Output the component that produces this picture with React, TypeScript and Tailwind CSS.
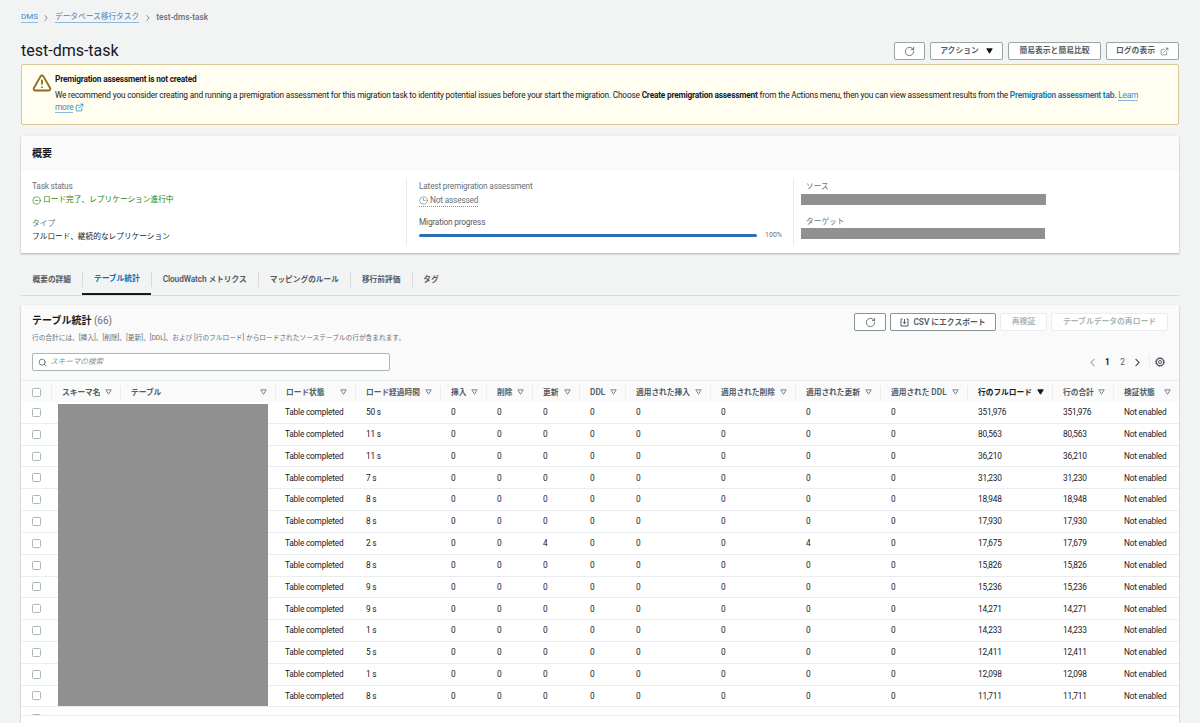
import { ChevronLeft, ChevronRight, CircleMinus, Clock3, ExternalLink, RotateCw, Search, TriangleAlert } from "lucide-react";
import type { ReactNode } from "react";

const GRID = "grid grid-cols-[30px_69px_155px_80px_85px_46px_46px_47px_46px_85px_85px_85px_87px_85px_61px_66px]";

const columns = ["スキーマ名", "テーブル", "ロード状態", "ロード経過時間", "挿入", "削除", "更新", "DDL", "適用された挿入", "適用された削除", "適用された更新", "適用された DDL", "行のフルロード", "行の合計", "検証状態"];

const rows: [string, string, string, string, string][] = [
  ["50 s", "0", "0", "351,976", "351,976"],
  ["11 s", "0", "0", "80,563", "80,563"],
  ["11 s", "0", "0", "36,210", "36,210"],
  ["7 s", "0", "0", "31,230", "31,230"],
  ["8 s", "0", "0", "18,948", "18,948"],
  ["8 s", "0", "0", "17,930", "17,930"],
  ["2 s", "4", "4", "17,675", "17,679"],
  ["8 s", "0", "0", "15,826", "15,826"],
  ["9 s", "0", "0", "15,236", "15,236"],
  ["9 s", "0", "0", "14,271", "14,271"],
  ["1 s", "0", "0", "14,233", "14,233"],
  ["5 s", "0", "0", "12,411", "12,411"],
  ["1 s", "0", "0", "12,098", "12,098"],
  ["8 s", "0", "0", "11,711", "11,711"],
];

function Caret({ filled = false }: { filled?: boolean }) {
  return (
    <svg width="7" height="6" viewBox="0 0 7 6" className="shrink-0">
      <path d="M0.8 0.8 H6.2 L3.5 5.2 Z" fill={filled ? "#16191f" : "none"} stroke={filled ? "#16191f" : "#7d868c"} strokeWidth="1" strokeLinejoin="round" />
    </svg>
  );
}

function Checkbox() {
  return <span className="block h-[9px] w-[9px] rounded-[1.5px] border border-[#aab7b8] bg-white" />;
}

function Button({ children, disabled = false, className = "" }: { children: ReactNode; disabled?: boolean; className?: string }) {
  return (
    <div className={`flex h-[18px] items-center justify-center rounded-[2px] border bg-white text-[7.8px] font-semibold ${disabled ? "border-[#eaeded] text-[#aab7b8]" : "border-[#9aa5a8] text-[#545b64]"} ${className}`}>
      {children}
    </div>
  );
}

function Refresh() {
  return <RotateCw size={11} strokeWidth={1.8} className="text-[#545b64]" />;
}

function Tab({ children, active = false, first = false }: { children: ReactNode; active?: boolean; first?: boolean }) {
  return (
    <div className={`relative flex h-full items-center px-[11.5px] pb-[4px] text-[7.7px] font-semibold ${active ? "border-b-2 border-[#16191f] text-[#0073bb]" : "text-[#545b64]"}`}>
      {!first && <span className="absolute left-0 top-[4px] h-[15px] w-px bg-[#d5dbdb]" />}
      <span className="whitespace-pre">{children}</span>
    </div>
  );
}

function Gear() {
  return (
    <svg width="10" height="10" viewBox="0 0 10 10" fill="none" stroke="#545b64" className="ml-[5.5px]">
      <circle cx="5" cy="5" r="3.7" strokeWidth="1.3" />
      <circle cx="5" cy="5" r="4.5" strokeWidth="0.8" strokeDasharray="1.2 1.15" />
      <circle cx="5" cy="5" r="1.5" strokeWidth="1" />
    </svg>
  );
}

function HeaderLabel({ text }: { text: string }) {
  if (text === "DDL") return <span className="text-[8.3px]">DDL</span>;
  if (text === "適用された DDL") return <span className="whitespace-pre">適用された <span className="text-[8.3px]">DDL</span></span>;
  return <span className="whitespace-nowrap">{text}</span>;
}

export default function App() {
  return (
    <div className="h-[723px] w-[1200px] overflow-hidden bg-[#f2f3f3] px-[21px] font-['Roboto','Noto_Sans_CJK_JP',sans-serif] text-[8.3px] text-[#16191f]">
      {/* breadcrumb */}
      <div className="flex h-[34px] items-center gap-[3.5px] pt-px text-[7.7px]">
        <span className="border-b border-[#8fb8d8] text-[8px] leading-[10px] text-[#3f86c0]">DMS</span>
        <ChevronRight size={10} className="text-[#687078]" />
        <span className="border-b border-[#8fb8d8] leading-[10px] text-[#3f86c0]">データベース移行タスク</span>
        <ChevronRight size={10} className="text-[#687078]" />
        <span className="text-[8.3px] font-medium text-[#687078]">test-dms-task</span>
      </div>

      {/* title row */}
      <div className="flex h-[30px] items-end justify-between pb-[4px]">
        <h1 className="mb-[-1px] text-[16px] font-normal leading-[20px] text-[#16191f]">test-dms-task</h1>
        <div className="flex gap-[5px]">
          <Button className="w-[31px]"><Refresh /></Button>
          <Button className="w-[73px] gap-[7px]">アクション<Caret filled /></Button>
          <Button className="w-[93px]">簡易表示と簡易比較</Button>
          <Button className="w-[73px] gap-[5px]">ログの表示<ExternalLink size={9} strokeWidth={1.6} /></Button>
        </div>
      </div>

      {/* alert */}
      <div className="flex h-[61px] gap-[3px] rounded-[2px] border border-[#dcc99a] bg-[#fffef0] pl-[10px] pt-[9px]">
        <TriangleAlert size={20} strokeWidth={2.2} className="mt-[-1px] shrink-0 text-[#8a6d25]" />
        <div className="whitespace-nowrap tracking-[-0.19px]">
          <div className="font-bold leading-[11px]">Premigration assessment is not created</div>
          <p className="mt-[4px] leading-[12px]">
            We recommend you consider creating and running a premigration assessment for this migration task to identity potential issues before your start the migration. Choose <b>Create premigration assessment</b> from the Actions menu, then you can view assessment results from the <b className="font-semibold text-[#0073bb]">Premigration assessment tab.</b> <span className="border-b border-[#8fb8d8] text-[#3f86c0]">Learn</span>
            <br />
            <span className="border-b border-[#8fb8d8] text-[#3f86c0]">more</span>{" "}
            <ExternalLink size={9} strokeWidth={1.8} className="inline text-[#0073bb]" />
          </p>
        </div>
      </div>

      {/* overview card */}
      <section className="mt-[11px] h-[117px] bg-white shadow-[0_1px_2px_rgba(0,28,36,0.3)]">
        <div className="flex h-[35px] items-center bg-[#fafafa] pl-[11px] text-[10px] font-bold">概要</div>
        <div className="grid h-[82px] grid-cols-[385px_387px_1fr] pt-[7px]">
          <div className="h-[68px] pl-[11px] pt-[3px]">
            <div className="leading-[11px] tracking-[-0.19px] text-[#687078]">Task status</div>
            <div className="mt-[2px] flex items-center gap-[2px] text-[7.7px] leading-[12px] text-[#1d8102]">
              <CircleMinus size={9} strokeWidth={1.6} />ロード完了、レプリケーション進行中
            </div>
            <div className="mt-[12px] text-[7.7px] leading-[11px] text-[#687078]">タイプ</div>
            <div className="mt-[2px] text-[7.7px] leading-[12px]">フルロード、継続的なレプリケーション</div>
          </div>
          <div className="h-[68px] border-l border-[#eaeded] pl-[12px] pt-[3px]">
            <div className="leading-[11px] tracking-[-0.19px] text-[#687078]">Latest premigration assessment</div>
            <div className="mt-[2px] inline-flex items-center gap-[2px] border-b border-dotted border-[#879596] leading-[12px] tracking-[-0.19px] text-[#687078]">
              <Clock3 size={9} strokeWidth={1.6} />Not assessed
            </div>
            <div className="mt-[9px] leading-[11px] tracking-[-0.19px] text-[#545b64]">Migration progress</div>
            <div className="mt-[3px] flex items-center gap-[8px] pr-[11px]">
              <div className="h-[2.5px] flex-1 rounded-full bg-[#2b6fb5]" />
              <span className="text-[7px] leading-[9px] text-[#687078]">100%</span>
            </div>
          </div>
          <div className="h-[68px] border-l border-[#eaeded] pl-[12px] pt-[3px]">
            <div className="text-[7.7px] leading-[11px] text-[#687078]">ソース</div>
            <div className="ml-[-5px] mt-[2px] h-[11px] w-[245px] bg-[#909090]" />
            <div className="mt-[11px] text-[7.7px] leading-[11px] text-[#687078]">ターゲット</div>
            <div className="ml-[-5px] mt-[1px] h-[11px] w-[244px] bg-[#909090]" />
          </div>
        </div>
      </section>

      {/* tabs */}
      <div className="mt-[15px] flex h-[28px] border-b border-[#d5dbdb]">
        <Tab first>概要の詳細</Tab>
        <Tab active>テーブル統計</Tab>
        <Tab><span className="text-[8.3px] tracking-[-0.1px]">CloudWatch</span> メトリクス</Tab>
        <Tab>マッピングのルール</Tab>
        <Tab>移行前評価</Tab>
        <Tab>タグ</Tab>
      </div>

      {/* table card */}
      <section className="mt-[9px] h-[430px] overflow-hidden bg-white shadow-[0_1px_2px_rgba(0,28,36,0.3)]">
        <div className="h-[75px] bg-[#fafafa] px-[11px] pt-[8px]">
          <div className="flex items-start justify-between">
            <div>
              <h2 className="text-[10px] font-bold leading-[16px]">テーブル統計 <span className="font-normal text-[#687078]">(66)</span></h2>
              <p className="mt-[4px] text-[6.7px] leading-[10px] text-[#687078]">行の合計には、[挿入]、[削除]、[更新]、[DDL]、および [行のフルロード] からロードされたソーステーブルの行が含まれます。</p>
            </div>
            <div className="flex gap-[4px]">
              <Button className="w-[32px] border-[#879596]"><Refresh /></Button>
              <Button className="w-[106px] gap-[4px] border-[#879596]">
                <svg width="9" height="9" viewBox="0 0 9 9" fill="none" stroke="#545b64" strokeWidth="1">
                  <path d="M2.5 1H1V8H8V1H6.5M4.5 1V5.5M2.8 4L4.5 5.7L6.2 4" />
                </svg>
                <span className="whitespace-pre"><span className="text-[8.3px]">CSV</span> にエクスポート</span>
              </Button>
              <Button disabled className="w-[47px]">再検証</Button>
              <Button disabled className="w-[117px]">テーブルデータの再ロード</Button>
            </div>
          </div>
          <div className="mt-[10px] flex items-center justify-between">
            <div className="flex h-[18px] w-[358px] items-center gap-[3px] rounded-[2px] border border-[#aab7b8] bg-white pl-[5px] text-[7.6px] italic text-[#879596]">
              <Search size={9} strokeWidth={2} className="text-[#545b64]" />スキーマの検索
            </div>
            <div className="flex items-center pr-[3px] text-[8.3px] text-[#545b64]">
              <span className="flex w-[15px] justify-center"><ChevronLeft size={13} className="text-[#aab7b8]" /></span>
              <span className="w-[15px] text-center font-bold text-[#16191f]">1</span>
              <span className="w-[15px] text-center">2</span>
              <span className="flex w-[15px] justify-center"><ChevronRight size={13} /></span>
              <span className="ml-[3.5px] h-[14px] w-px bg-[#eaeded]" />
              <Gear />
            </div>
          </div>
        </div>

        {/* header */}
        <div className={`${GRID} h-[22px] border-t border-[#eaeded] bg-[#fafafa] text-[7.7px] font-semibold text-[#545b64]`}>
          <div className="flex items-center pl-[11px]"><Checkbox /></div>
          {columns.map((c) => (
            <div key={c} className={`my-[5px] flex items-center justify-between border-l border-[#eaeded] pl-[10px] pr-[8px] ${c === "行のフルロード" ? "text-[#16191f]" : ""}`}>
              <HeaderLabel text={c} />
              <Caret filled={c === "行のフルロード"} />
            </div>
          ))}
        </div>

        {/* body */}
        <div className="relative">
          <div className="absolute left-[37px] top-[2px] z-10 h-[302px] w-[210px] bg-[#909090]" />
          {rows.map((r, i) => (
            <div key={i} className={`${GRID} h-[21.82px] items-center border-b border-[#eaeded] tracking-[-0.2px] text-[#16191f]`}>
              <div className="pl-[11px]"><Checkbox /></div>
              <div />
              <div />
              <div className="pl-[10px]">Table completed</div>
              <div className="pl-[11px]">{r[0]}</div>
              <div className="pl-[11px]">0</div>
              <div className="pl-[11px]">0</div>
              <div className="pl-[11px]">{r[1]}</div>
              <div className="pl-[11px]">0</div>
              <div className="pl-[11px]">0</div>
              <div className="pl-[11px]">0</div>
              <div className="pl-[11px]">{r[2]}</div>
              <div className="pl-[11px]">0</div>
              <div className="pl-[11px]">{r[3]}</div>
              <div className="pl-[11px]">{r[4]}</div>
              <div className="pl-[11px]">Not enabled</div>
            </div>
          ))}
          <div className="h-[9px] overflow-hidden border-b border-[#eaeded] pl-[11px] pt-[7px]"><Checkbox /></div>
        </div>
      </section>
    </div>
  );
}
